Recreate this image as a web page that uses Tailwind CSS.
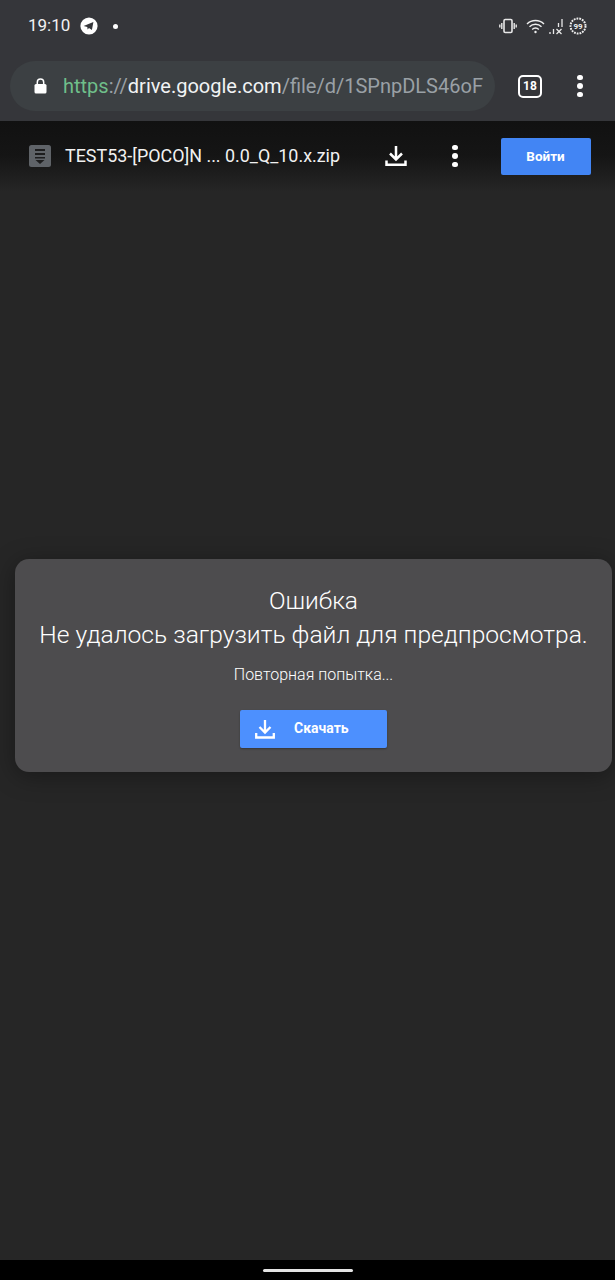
<!DOCTYPE html>
<html lang="en">
<head>
  <meta charset="UTF-8">
  <meta name="viewport" content="width=device-width, initial-scale=1.0">
  <title>Drive preview</title>
  <script src="https://cdn.jsdelivr.net/npm/@tailwindcss/browser@4"></script>
</head>
<body class="bg-[#262626] font-['Roboto',sans-serif] text-white">
  <div class="flex h-[1280px] w-[615px] flex-col overflow-hidden">
    <!-- browser chrome -->
    <div class="h-[121px] shrink-0 bg-[#35363a]">
      <div class="flex h-[52px] items-center pl-[28px] pr-[28px]">
        <span class="text-[17px] text-[#f1f1f2]">19:10</span>
        <svg class="ml-[10px]" width="18" height="18" viewBox="0 0 18 18">
          <circle cx="9" cy="9" r="8.6" fill="#fff"/>
          <path d="M3.6 8.9 13.4 5 11.9 13 9 11 7.6 12.4 7.3 10z" fill="#35363a"/>
        </svg>
        <span class="ml-[15px] h-[5px] w-[5px] rounded-full bg-white"></span>
        <div class="ml-auto flex items-center">
          <svg width="18" height="16" viewBox="0 0 18 16" fill="none" stroke="#e8e8e8">
            <rect x="5" y="1.5" width="8" height="13" rx="1.2" stroke-width="1.6"/>
            <path d="M2.8 5v6M.8 6.5v3M15.2 5v6M17.2 6.5v3" stroke-width="1.4"/>
          </svg>
          <svg class="ml-[9px]" width="19" height="15" viewBox="0 0 19 15" fill="none" stroke="#eee" stroke-width="1.4">
            <path d="M1 5a12 12 0 0 1 17 0M3.5 7.8a8.4 8.4 0 0 1 12 0M6.2 10.4a4.6 4.6 0 0 1 6.6 0"/>
            <circle cx="9.5" cy="13" r="1.2" fill="#eee" stroke="none"/>
          </svg>
          <svg class="ml-[4px]" width="14" height="17" viewBox="0 0 14 17" fill="none" stroke="#e8e8e8" stroke-width="1.3">
            <path d="M1 14v2M4.500 11V16M9.500 5V9M13 1V9"/>
            <path d="M7.500 11 12.500 16M12.500 11 7.500 16"/>
          </svg>
          <svg class="ml-[6px]" width="18" height="18" viewBox="0 0 18 18" fill="none">
            <circle cx="9" cy="9" r="7.500" stroke="#eee" stroke-width="2" stroke-dasharray="1.800 1"/>
            <text x="9" y="12" text-anchor="middle" font-family="Roboto" font-size="8" font-weight="700" fill="#eee">99</text>
          </svg>
        </div>
      </div>
      <div class="mt-[9px] flex items-center pl-[10px]">
        <div class="flex h-[50px] w-[485px] items-center overflow-hidden rounded-full bg-[#3c4043] pl-[24px]">
          <svg width="13" height="16" viewBox="0 0 13 16" class="shrink-0">
            <rect x=".5" y="6" width="12" height="9.500" rx="1.500" fill="#fff"/>
            <path d="M3.300 7V4.300a3.200 3.200 0 0 1 6.400 0V7" fill="none" stroke="#fff" stroke-width="1.500"/>
          </svg>
          <div class="ml-[16px] whitespace-nowrap text-[20px] text-[#9aa0a6]"><span class="text-[#6fbf8a]">https</span>://<span class="text-[#f1f3f4]">drive.google.com</span>/file/d/1SPnpDLS46oF</div>
        </div>
        <div class="ml-[23px] flex h-[23px] w-[24px] items-center justify-center rounded-[5px] border-[2.500px] border-white text-[12px] font-bold">18</div>
        <div class="ml-[35px] flex flex-col gap-[3px]">
          <span class="h-[5.500px] w-[5.500px] rounded-full bg-white"></span>
          <span class="h-[5.500px] w-[5.500px] rounded-full bg-white"></span>
          <span class="h-[5.500px] w-[5.500px] rounded-full bg-white"></span>
        </div>
      </div>
    </div>

    <!-- drive toolbar -->
    <div class="flex h-[70px] shrink-0 items-center bg-linear-to-b from-[#111111] via-[#151515] to-[#262626] pl-[29px]">
      <svg width="22" height="22" viewBox="0 0 22 22" class="shrink-0">
        <rect width="22" height="22" rx="2.500" fill="#5f6368"/>
        <path d="M6 4h10v2H6zM6 8h10v2H6zM6 12h10v1.500H6zM6.500 15h9L11 19z" fill="#1d1d1e"/>
      </svg>
      <span class="ml-[14px] w-[290px] shrink-0 whitespace-nowrap text-[17.900px] text-[#f1f1f1]">TEST53-[POCO]N ... 0.0_Q_10.x.zip</span>
      <svg class="ml-[30px]" width="22" height="22" viewBox="0 0 22 22" fill="none" stroke="#fff" stroke-width="2.500">
        <path d="M11 1v13M5 8.500l6 6 6-6"/>
        <path d="M1.500 15.500v4.300h19v-4.300"/>
      </svg>
      <div class="ml-[45px] flex flex-col gap-[3px]">
        <span class="h-[5.500px] w-[5.500px] rounded-full bg-white"></span>
        <span class="h-[5.500px] w-[5.500px] rounded-full bg-white"></span>
        <span class="h-[5.500px] w-[5.500px] rounded-full bg-white"></span>
      </div>
      <div class="ml-[43px] flex h-[37px] w-[90px] items-center justify-center rounded-[2px] bg-[#4285f4] text-[13.500px] font-bold">Войти</div>
    </div>

    <!-- preview area -->
    <div class="flex-1 pl-[15px] pt-[368px]">
      <div class="flex h-[213px] w-[597px] flex-col items-center rounded-[14px] bg-[#4d4c4e] shadow-[0_4px_24px_rgba(0,0,0,0.35)]">
        <div class="mt-[25px] text-[24.500px] font-light leading-[34px] text-white">Ошибка</div>
        <div class="whitespace-nowrap text-[24.600px] font-light leading-[34px] text-white">Не удалось загрузить файл для предпросмотра.</div>
        <div class="mt-[12px] text-[16px] font-light leading-[22px] text-white">Повторная попытка...</div>
        <div class="mt-[24px] flex h-[38px] w-[147px] items-center rounded-[2px] bg-[#4d90fe] pl-[15px] shadow-[0_1px_2px_rgba(0,0,0,0.3)]">
          <svg width="20" height="20" viewBox="0 0 20 20" fill="none" stroke="#fff" stroke-width="2.300">
            <path d="M10 1v12M4.500 8l5.500 5.500L15.500 8"/>
            <path d="M1.200 14v4.500h17.600V14"/>
          </svg>
          <span class="ml-[19px] -mt-[2px] text-[14px] font-bold">Скачать</span>
        </div>
      </div>
    </div>

    <!-- nav bar -->
    <div class="flex h-[20px] shrink-0 items-center justify-center bg-black">
      <span class="h-[3px] w-[90px] rounded-full bg-[#e4e4e4]"></span>
    </div>
  </div>
</body>
</html>
